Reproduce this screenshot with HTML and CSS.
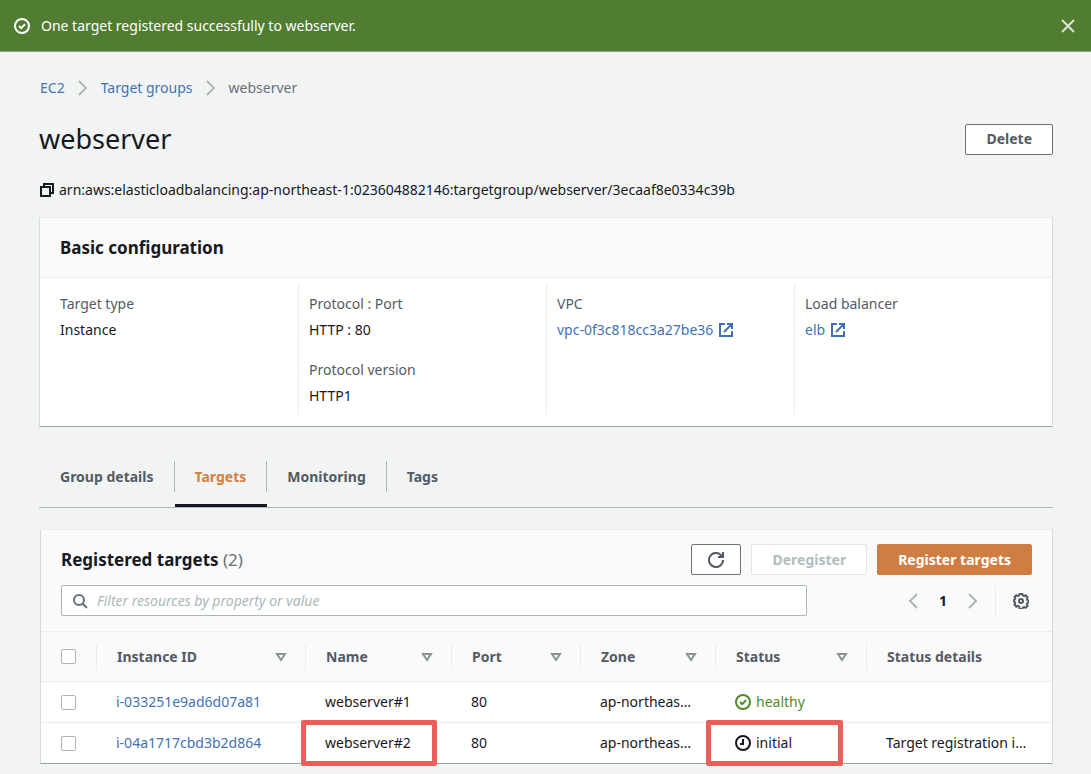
FILE: index.html
```html
<!DOCTYPE html>
<html lang="en">
<head>
<meta charset="utf-8">
<title>webserver - Target groups</title>
<link rel="stylesheet" href="styles.css">
</head>
<body>
<svg class="sprite" aria-hidden="true">
  <symbol id="i-ok" viewBox="0 0 16 16"><circle cx="8" cy="8" r="7"/><path d="M5 8l2.200 2.200L11 6.300"/></symbol>
  <symbol id="i-pending" viewBox="0 0 16 16"><circle cx="8" cy="8" r="7"/><path d="M8 4v5H5"/></symbol>
  <symbol id="i-close" viewBox="0 0 16 16"><path d="M2 2l12 12M14 2L2 14"/></symbol>
  <symbol id="i-right" viewBox="0 0 16 16"><path d="M4 1l7 7-7 7"/></symbol>
  <symbol id="i-left" viewBox="0 0 16 16"><path d="M12 1L5 8l7 7"/></symbol>
  <symbol id="i-copy" viewBox="0 0 16 16"><path d="M2 5h9v9H2zM5 5V2h9v9h-3"/></symbol>
  <symbol id="i-external" viewBox="0 0 16 16"><path d="M7 2H2v12h12V9M9 2h5v5M14 2L6 10"/></symbol>
  <symbol id="i-refresh" viewBox="0 0 16 16"><path d="M15 8a7 7 0 1 1-1.700-4.600L15 5M10 5h5V0"/></symbol>
  <symbol id="i-search" viewBox="0 0 16 16"><circle cx="7" cy="7" r="5"/><path d="M10.700 10.700L15 15"/></symbol>
  <symbol id="i-gear" viewBox="0 0 16 16"><path d="M6.600 1h2.800l.5 1.600 1.300.5 1.500-.8 1.900 2-.8 1.500.5 1.200 1.200.5v2l-1.200.6-.5 1.300.8 1.400-1.900 2-1.500-.8-1.300.5-.5 1.500H6.600L6.100 13.400l-1.300-.5-1.500.8-1.900-2 .8-1.400-.5-1.300L.9 8.500v-1.500l.9-.5.5-1.300-.8-1.400 1.900-1.600 1.400.9 1.300-.5z"/><circle cx="8" cy="8" r="2"/></symbol>
  <symbol id="i-sort" viewBox="0 0 12 10"><path d="M2 2h8L6 8z"/></symbol>
</svg>

<div class="flash" role="status">
  <svg class="icon"><use href="#i-ok"/></svg>
  <span class="flash-text">One target registered successfully to webserver.</span>
  <button class="plain" type="button" aria-label="Dismiss"><svg class="icon"><use href="#i-close"/></svg></button>
</div>

<main class="page">
  <nav class="crumbs" aria-label="Breadcrumb">
    <a href="#">EC2</a>
    <svg class="icon"><use href="#i-right"/></svg>
    <a href="#">Target groups</a>
    <svg class="icon"><use href="#i-right"/></svg>
    <span>webserver</span>
  </nav>

  <header class="title-row">
    <h1>webserver</h1>
    <button class="btn" type="button">Delete</button>
  </header>

  <div class="arn">
    <button class="plain" type="button" aria-label="Copy ARN"><svg class="icon"><use href="#i-copy"/></svg></button>
    <span>arn:aws:elasticloadbalancing:ap-northeast-1:023604882146:targetgroup/webserver/3ecaaf8e0334c39b</span>
  </div>

  <section class="panel">
    <h2 class="panel-head">Basic configuration</h2>
    <div class="config">
      <dl><dt>Target type</dt><dd>Instance</dd></dl>
      <dl><dt>Protocol : Port</dt><dd>HTTP : 80</dd><dt>Protocol version</dt><dd>HTTP1</dd></dl>
      <dl><dt>VPC</dt><dd><a href="#">vpc-0f3c818cc3a27be36 <svg class="icon"><use href="#i-external"/></svg></a></dd></dl>
      <dl><dt>Load balancer</dt><dd><a href="#">elb <svg class="icon"><use href="#i-external"/></svg></a></dd></dl>
    </div>
  </section>

  <div class="tabs" role="tablist">
    <button type="button" role="tab" aria-selected="false"><span>Group details</span></button>
    <button type="button" role="tab" aria-selected="true"><span>Targets</span></button>
    <button type="button" role="tab" aria-selected="false"><span>Monitoring</span></button>
    <button type="button" role="tab" aria-selected="false"><span>Tags</span></button>
  </div>

  <section class="panel targets">
    <div class="toolbar">
      <div class="toolbar-row">
        <h2>Registered targets <span class="count">(2)</span></h2>
        <div class="actions">
          <button class="btn btn-icon" type="button" aria-label="Refresh"><svg class="icon"><use href="#i-refresh"/></svg></button>
          <button class="btn" type="button" disabled>Deregister</button>
          <button class="btn btn-primary" type="button">Register targets</button>
        </div>
      </div>
      <div class="toolbar-row">
        <label class="search">
          <svg class="icon"><use href="#i-search"/></svg>
          <input type="text" aria-label="Filter resources" placeholder="Filter resources by property or value">
        </label>
        <div class="pager">
          <button class="plain" type="button" aria-label="Previous page"><svg class="icon"><use href="#i-left"/></svg></button>
          <b>1</b>
          <button class="plain" type="button" aria-label="Next page"><svg class="icon"><use href="#i-right"/></svg></button>
          <button class="plain settings" type="button" aria-label="Preferences"><svg class="icon"><use href="#i-gear"/></svg></button>
        </div>
      </div>
    </div>
    <table>
      <colgroup><col class="c-check"><col class="c-id"><col class="c-name"><col class="c-port"><col class="c-zone"><col class="c-status"><col></colgroup>
      <thead>
        <tr>
          <th><input type="checkbox" aria-label="Select all"></th>
          <th><div>Instance ID <svg class="sort"><use href="#i-sort"/></svg></div></th>
          <th><div>Name <svg class="sort"><use href="#i-sort"/></svg></div></th>
          <th><div>Port <svg class="sort"><use href="#i-sort"/></svg></div></th>
          <th><div>Zone <svg class="sort"><use href="#i-sort"/></svg></div></th>
          <th><div>Status <svg class="sort"><use href="#i-sort"/></svg></div></th>
          <th><div>Status details</div></th>
        </tr>
      </thead>
      <tbody>
        <tr>
          <td><input type="checkbox" aria-label="Select webserver#1"></td>
          <td><a href="#">i-033251e9ad6d07a81</a></td>
          <td>webserver#1</td>
          <td>80</td>
          <td>ap-northeas…</td>
          <td><span class="status healthy"><svg class="icon"><use href="#i-ok"/></svg>healthy</span></td>
          <td></td>
        </tr>
        <tr>
          <td><input type="checkbox" aria-label="Select webserver#2"></td>
          <td><a href="#">i-04a1717cbd3b2d864</a></td>
          <td class="marked mark-name">webserver#2</td>
          <td>80</td>
          <td>ap-northeas…</td>
          <td class="marked mark-status"><span class="status"><svg class="icon"><use href="#i-pending"/></svg>initial</span></td>
          <td>Target registration i…</td>
        </tr>
      </tbody>
    </table>
  </section>
</main>
</body>
</html>
```
FILE: styles.css
```css
* { box-sizing: border-box; }

body {
  margin: 0;
  background: #f2f4f4;
  color: #16191f;
  font: 14px/20px "Noto Sans", "Open Sans", sans-serif;
}

button, input { font: inherit; color: inherit; }
h1, h2, dl, dd { margin: 0; }
a { color: #3f72b5; text-decoration: none; }

.sprite { position: absolute; width: 0; height: 0; }

.icon {
  width: 16px;
  height: 16px;
  flex: none;
  fill: none;
  stroke: currentColor;
  stroke-width: 2;
  overflow: visible;
}

.plain {
  display: flex;
  padding: 0;
  border: 0;
  background: none;
}

.flash {
  display: flex;
  align-items: center;
  gap: 11px;
  height: 52px;
  padding: 0 15px 0 14px;
  background: #507d32;
  border-bottom: 1px solid #8b9a91;
  color: #fff;
}
.flash-text { flex: 1; }
.flash .plain { color: #dbe4d6; }

.page { padding: 26px 38px 9px 39px; }

.crumbs {
  display: flex;
  align-items: center;
  gap: 10px;
  padding-left: 1px;
  color: #687078;
}
.crumbs .icon { color: #aab7b8; }

.title-row {
  display: flex;
  align-items: center;
  justify-content: space-between;
  margin-top: 21px;
}
h1 { font-size: 27px; line-height: 40px; font-weight: 400; }

.btn {
  height: 31px;
  padding: 0 20px;
  border: 1px solid #6b707a;
  border-radius: 2px;
  background: #fff;
  color: #545b64;
  font-weight: 700;
}
.btn:disabled { border-color: #e2e6e6; color: #b2bdbe; }
.btn-primary { background: #cf7d42; border-color: #cf7d42; color: #fff; }
.btn-icon { display: flex; align-items: center; padding: 0 16px; }

.arn {
  display: flex;
  align-items: center;
  gap: 4px;
  margin: 21px 0 17px;
}

.panel {
  background: #fff;
  border: 1px solid #d5dbdb;
  border-top-color: #eaeded;
  border-bottom-color: #95a3a5;
}
.targets { margin-left: 1px; }

h2 { font-size: 17px; line-height: 28px; font-weight: 700; }
.panel-head {
  padding: 16px 20px 15px;
  background: #fafafa;
  border-bottom: 1px solid #eaeded;
}

.config {
  display: grid;
  grid-template-columns: repeat(4, 1fr);
  padding: 5px 10px 11px;
}
.config dl { padding: 11px 10px 9px; border-left: 1px solid #eaeded; }
.config dl:first-child { border-left: 0; }
dt { color: #545b64; }
dd { margin-top: 6px; }
dd + dt { margin-top: 20px; }
dd a { display: flex; align-items: center; gap: 5px; }

.tabs {
  display: flex;
  margin: 34px 0 21px;
  padding-left: 1px;
  border-bottom: 1px solid #aab7b8;
}
.tabs button {
  padding: 0 0 12px;
  border: 0;
  border-bottom: 3px solid transparent;
  background: none;
  color: #545b64;
  font-weight: 700;
}
.tabs span {
  display: block;
  padding: 6px 20px 5px;
  border-right: 1px solid #aab7b8;
}
.tabs button:last-child span { border-right: 0; }
.tabs [aria-selected="true"] { border-bottom-color: #16191f; color: #d5803f; }

.toolbar {
  display: grid;
  gap: 10px;
  padding: 14px 20px 15px;
  background: #fafafa;
}
.toolbar-row { display: flex; align-items: center; justify-content: space-between; }
.count { color: #687078; font-weight: 400; }
.actions { display: flex; gap: 10px; }

.search {
  display: flex;
  align-items: center;
  gap: 9px;
  flex: 0 1 746px;
  height: 31px;
  padding: 0 10px;
  border: 1px solid #aab7b8;
  border-radius: 2px;
  background: #fff;
  color: #687078;
}
.search input { flex: 1; padding: 0; border: 0; outline: 0; background: none; }
.search input::placeholder { color: #aab7b8; font-style: italic; opacity: 1; }

.pager { display: flex; align-items: center; gap: 18px; }
.pager .plain { color: #aab7b8; }
.pager .settings {
  align-items: center;
  height: 31px;
  padding: 0 3px 0 17px;
  margin-left: -4px;
  border-left: 1px solid #eaeded;
  color: #545b64;
}

table { width: 100%; border-collapse: separate; border-spacing: 0; table-layout: fixed; }
.c-check { width: 55px; }
.c-id { width: 209px; }
.c-name { width: 146px; }
.c-port { width: 129px; }
.c-zone { width: 135px; }
.c-status { width: 151px; }

th, td { padding: 0 20px; border-top: 1px solid #eaeded; text-align: left; white-space: nowrap; }
th { height: 50px; padding: 0; background: #fafafa; color: #545b64; }
th:first-child { padding: 0 20px; }
th div {
  display: flex;
  align-items: center;
  justify-content: space-between;
  height: 26px;
  padding: 0 18px 0 20px;
  border-left: 1px solid #eaeded;
}
td { height: 41px; }

.sort { width: 12px; height: 10px; fill: none; stroke: #879596; stroke-width: 2; }

input[type="checkbox"] {
  appearance: none;
  display: block;
  width: 15px;
  height: 15px;
  margin: 0;
  border: 1px solid #aab7b8;
  border-radius: 2px;
  background: #fff;
}

.status { display: flex; align-items: center; gap: 5px; }
.healthy { color: #4f8a2d; }

.marked { position: relative; }
.marked::after {
  content: "";
  position: absolute;
  inset: -3px 14px -3px -4px;
  border: 5px solid #eb5f5a;
  border-radius: 2px;
}
.mark-status::after { right: 23px; left: -9px; }
```
